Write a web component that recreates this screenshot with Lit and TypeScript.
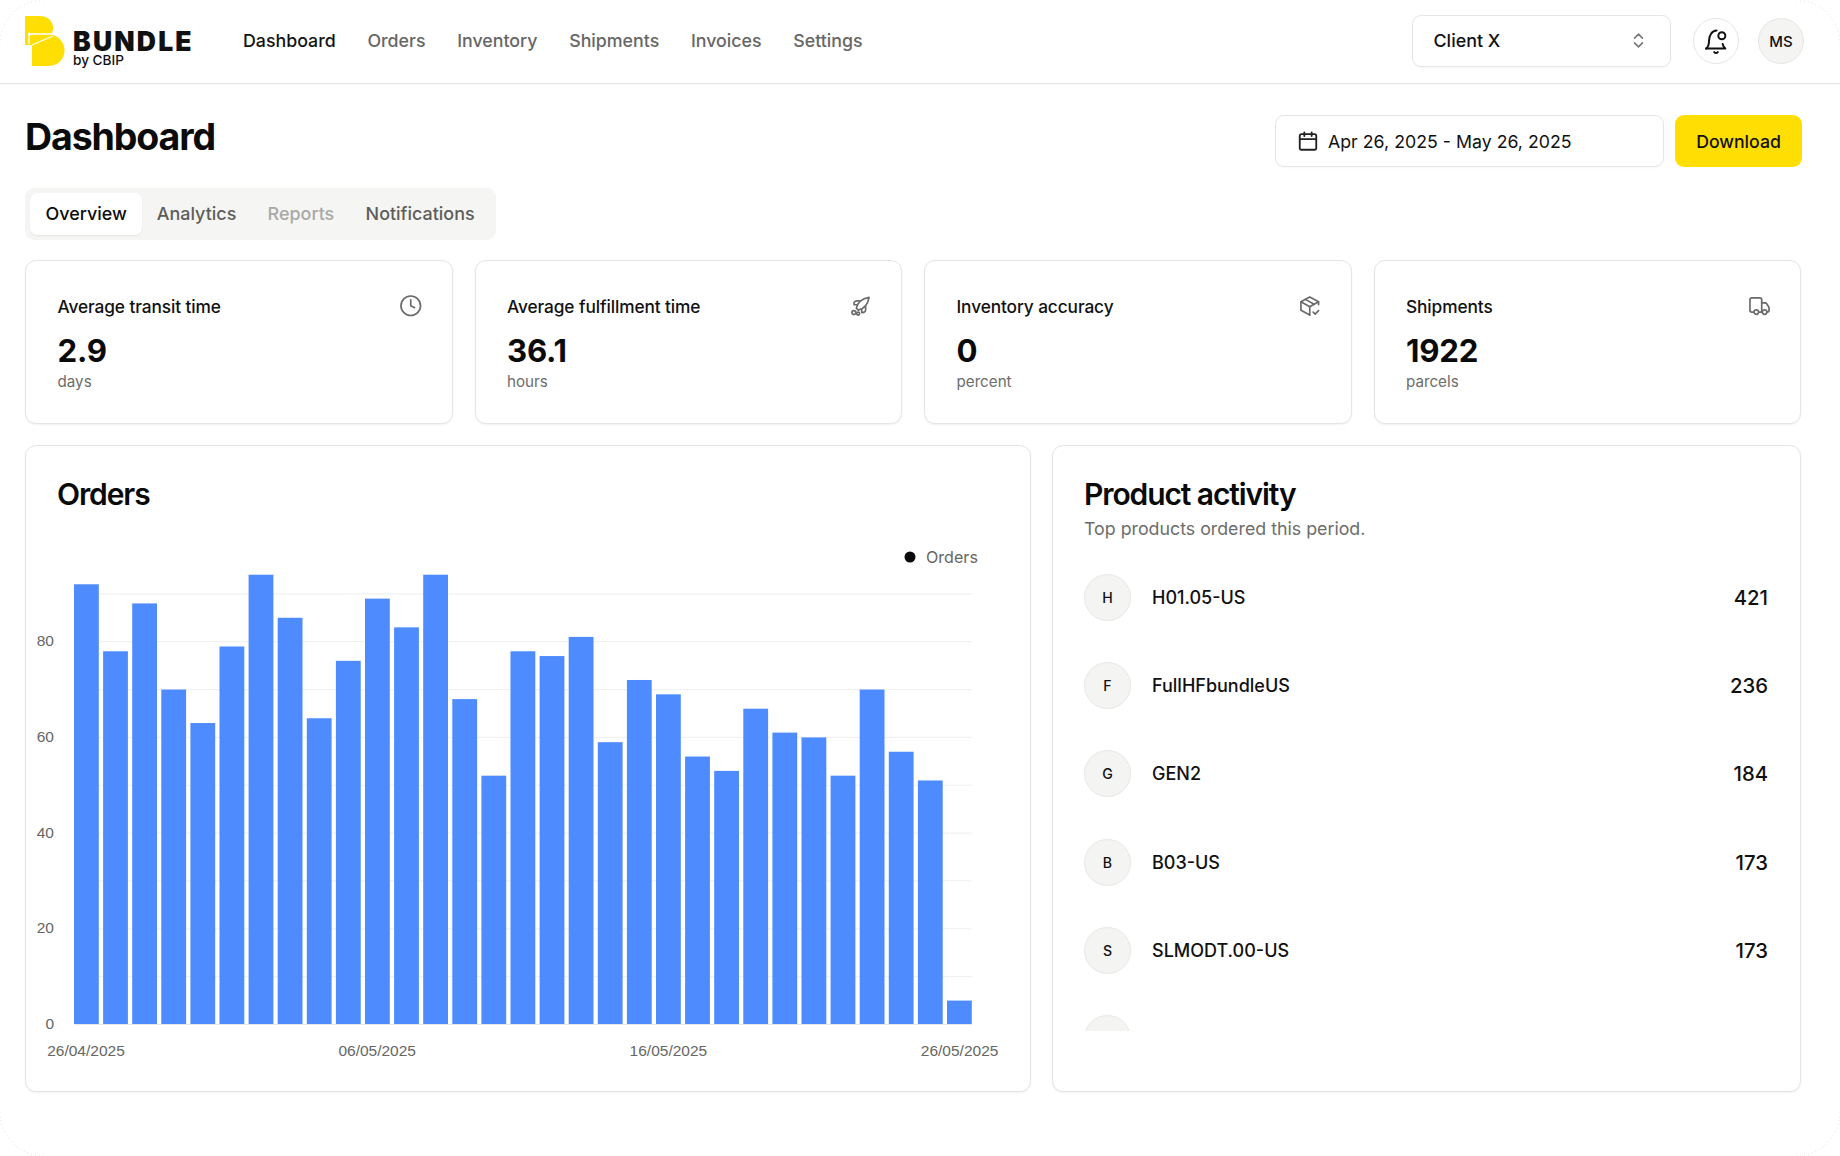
import { LitElement, html, css, svg } from "lit";
import { customElement } from "lit/decorators.js";

const BARS = [92,78,88,70,63,79,94,85,64,76,89,83,94,68,52,78,77,81,59,72,69,56,53,66,61,60,52,70,57,51,5];
const BASE = 485.500;
const UNIT = 4.785;
const X0 = 48;
const PITCH = 29.100;

const CARDS = [
  { title: "Average transit time", value: "2.9", unit: "days", icon: "clock" },
  { title: "Average fulfillment time", value: "36.1", unit: "hours", icon: "rocket" },
  { title: "Inventory accuracy", value: "0", unit: "percent", icon: "box" },
  { title: "Shipments", value: "1922", unit: "parcels", icon: "truck" },
];
const PRODUCTS = [
  { l: "H", n: "H01.05-US", v: "421" },
  { l: "F", n: "FullHFbundleUS", v: "236" },
  { l: "G", n: "GEN2", v: "184" },
  { l: "B", n: "B03-US", v: "173" },
  { l: "S", n: "SLMODT.00-US", v: "173" },
  { l: "", n: "", v: "" },
];

const icon = (name: string) => {
  switch (name) {
    case "clock":
      return html`<svg class="ic" viewBox="0 0 24 24"><circle cx="12" cy="12" r="10"/><path d="M12 6v6l4 2"/></svg>`;
    case "rocket":
      return html`<svg class="ic" viewBox="0 0 24 24"><path d="M9.500 16.500 7.500 14.500C8.500 10 12 5 20.500 3.500 19 12 14 15.500 9.500 16.500Z"/><path d="M8 11H5.200C4.500 9 6 7 8 7H11"/><path d="M13 16v2.800C15 19.500 17 18 17 16v-3"/><circle cx="5" cy="19" r="2"/><circle cx="9.300" cy="20" r="1.500"/></svg>`;
    case "box":
      return html`<svg class="ic" viewBox="0 0 24 24"><path d="M21 11V8L12 3 3 8v8.500L12 21.500"/><path d="M3 8l9 5 9-5"/><path d="M12 13v8.500"/><path d="M7.500 5.500l9 5"/><path d="M15.500 18.500l2 2 3.500-3.500"/></svg>`;
    default:
      return html`<svg class="ic" viewBox="0 0 24 24"><path d="M6 18.500H4a2 2 0 0 1-2-2V6a2 2 0 0 1 2-2h8a2 2 0 0 1 2 2v12.500"/><path d="M14 9h3.500a2 2 0 0 1 1.700 1l2.300 3.800V16.500a2 2 0 0 1-2 2"/><path d="M11 18.500h3.500"/><circle cx="8.500" cy="18.500" r="2.300"/><circle cx="17" cy="18.500" r="2.300"/></svg>`;
  }
};

@customElement("app-root")
export class AppRoot extends LitElement {
  static styles = css`
    :host {
      display: block;
      position: relative;
      width: 1840px;
      height: 1156px;
      background: #fff;
      font-family: Inter, "Noto Sans", sans-serif;
      color: #0c0c0c;
      overflow: hidden;
    }
    * { box-sizing: border-box; }
    .corners { position: absolute; inset: 0; pointer-events: none; }
    .corners path { fill: none; stroke: #e2e2e2; stroke-width: 1; stroke-dasharray: 1 3; }

    header {
      display: flex;
      align-items: center;
      height: 84px;
      padding: 0 36px 0 25px;
      border-bottom: 1px solid #e6e6e6;
      box-shadow: 0 1px 1px rgba(0,0,0,.03);
    }
    .logo { display: flex; align-items: center; width: 218px; flex: none; }
    .logo svg { width: 40px; height: 51px; flex: none; display: block; margin-top: -1px; }
    .wordmark { margin-left: 8px; display: flex; flex-direction: column; margin-top: 16.500px; }
    .wordmark b {
      font-size: 26.500px; line-height: 19px; font-weight: 900; letter-spacing: 2.200px; color: #111;
    }
    .wordmark span { font-size: 13.600px; line-height: 15px; font-weight: 500; color: #111; margin-top: 2.500px; }
    nav { display: flex; gap: 31.700px; font-size: 17.800px; font-weight: 500; color: #666; margin-top: -2px; }
    nav .on { color: #141414; }
    .spacer { flex: 1; }
    .select {
      width: 259px; height: 52px; margin-top: -2px;
      border: 1px solid #e5e5e5; border-radius: 9px;
      display: flex; align-items: center; justify-content: space-between;
      padding: 0 22px 0 20.500px;
      font-size: 17.900px; font-weight: 500; color: #111;
      box-shadow: 0 1px 2px rgba(0,0,0,.03);
    }
    .select svg { width: 19px; height: 19px; fill: none; stroke: #777; stroke-width: 2; stroke-linecap: round; stroke-linejoin: round; }
    .round {
      width: 46px; height: 46px; border-radius: 50%;
      border: 1px solid #e5e5e5;
      display: flex; align-items: center; justify-content: center;
      margin-left: 22px; margin-top: -1px; flex: none;
    }
    .round.bell svg { width: 28px; height: 28px; fill: none; stroke: #111; stroke-width: 1.700; stroke-linecap: round; stroke-linejoin: round; }
    .round.me { margin-left: 19px; background: #f4f4f3; font-size: 15px; font-weight: 500; color: #111; }

    main { padding: 31px 39px 0 25px; }
    .top { display: flex; align-items: flex-start; justify-content: space-between; height: 52px; }
    h1 {
      margin: 0; font-size: 37.500px; line-height: 44px; font-weight: 700; letter-spacing: -1.100px; color: #0b0b0b;
    }
    .actions { display: flex; gap: 11px; margin-right: -1px; }
    .date {
      width: 389px; height: 52px;
      border: 1px solid #e5e5e5; border-radius: 9px;
      display: flex; align-items: center; gap: 9px;
      padding-left: 21px;
      font-size: 17.750px; font-weight: 400; color: #111;
      box-shadow: 0 1px 2px rgba(0,0,0,.03);
    }
    .date svg { width: 22px; height: 22px; fill: none; stroke: #222; stroke-width: 2; stroke-linecap: round; stroke-linejoin: round; }
    .dl {
      width: 127px; height: 52px; border-radius: 9px; background: #ffde04;
      display: flex; align-items: center; justify-content: center;
      font-size: 17.700px; font-weight: 500; color: #111;
    }
    .tabs {
      display: inline-flex; align-items: center;
      margin-top: 21px;
      height: 52px; padding: 0 21px 0 4.500px;
      background: #f5f5f4; border-radius: 9px;
      font-size: 17.950px; font-weight: 500; color: #5d5d5b;
      gap: 31.300px;
    }
    .tabs div { line-height: 42px; }
    .tabs .on {
      background: #fff; color: #0c0c0c; padding: 0 15.500px 0 16px; border-radius: 7px;
      box-shadow: 0 1px 2px rgba(0,0,0,.07);
      margin-right: -17px;
    }
    .tabs .off { color: #a9a9a7; }

    .cards { display: grid; grid-template-columns: repeat(4, 1fr); gap: 22px; margin-top: 20px; }
    .card {
      border: 1px solid #e5e5e5; border-radius: 11px; background: #fff;
      box-shadow: 0 1px 2px rgba(0,0,0,.06);
    }
    .stat { height: 164px; padding: 32px 29px 0 31.500px; }
    .stat-head { display: flex; justify-content: space-between; align-items: center; height: 26px; font-size: 17.300px; font-weight: 500; letter-spacing: -.1px; color: #111; }
    .ic { width: 23.500px; height: 23.500px; fill: none; stroke: #6a6a68; stroke-width: 1.700; stroke-linecap: round; stroke-linejoin: round; flex: none; display: block; }
    .val { font-size: 31.200px; line-height: 36px; font-weight: 700; margin-top: 14px; color: #0a0a0a; letter-spacing: -.2px; }
    .unit { font-size: 15.200px; line-height: 20px; color: #6d6d6b; margin-top: 3px; }

    .row { display: grid; grid-template-columns: 1006px 1fr; gap: 21px; margin-top: 21px; }
    .panel { height: 647px; position: relative; }
    h2 { margin: 0; font-size: 30px; line-height: 36px; font-weight: 600; letter-spacing: -1.100px; color: #0a0a0a; }
    .orders { padding: 30px 0 0 0; }
    .orders h2 { padding-left: 31px; }
    .chart { display: block; margin-top: 27px; width: 1004px; height: 560px; }
    .chart text { font-family: "Liberation Sans", Arial, sans-serif; font-size: 15.500px; fill: #666664; }
    .chart text.lg { font-family: Inter, sans-serif; fill: #666664; font-size: 16.100px; }

    .products { padding: 30px 32px 0 31px; }
    .sub { font-size: 17.800px; line-height: 24px; color: #6d6d6b; margin-top: 5px; }
    .list { margin-top: 33px; height: 457px; overflow: hidden; display: flex; flex-direction: column; gap: 41.200px; }
    .item { display: flex; align-items: center; height: 47px; flex: none; }
    .av {
      width: 47px; height: 47px; border-radius: 50%; background: #f4f4f3; border: 1px solid #e7e7e6;
      display: flex; align-items: center; justify-content: center;
      font-size: 14.100px; font-weight: 500; color: #111; flex: none;
    }
    .name { margin-left: 21px; font-size: 18px; font-weight: 500; color: #111; flex: 1; }
    .num { font-size: 20.300px; font-weight: 500; color: #111; }
  `;

  render() {
    const grid = Array.from({ length: 9 }, (_, i) => BASE - (i + 1) * UNIT * 10);
    const right = X0 + 30 * PITCH + 24.800;
    return html`
      <header>
        <div class="logo">
          <svg viewBox="0 0 40 51" aria-hidden="true">
            <path fill="#ffde04" d="M0 0H15C24 0 29 7 28 13 27 16 27 18 28 19 35 21 40 28 39.500 35 39 44 32 50 23 50H7V29H0Z"/>
            <path fill="none" stroke="#fff" stroke-width="1.300" d="M4 18H28M4 18V28M7 29 28 20"/>
            <circle cx="4.500" cy="18" r="1.600" fill="#fff"/>
          </svg>
          <div class="wordmark"><b>BUNDLE</b><span>by CBIP</span></div>
        </div>
        <nav>
          <span class="on">Dashboard</span><span>Orders</span><span>Inventory</span><span>Shipments</span><span>Invoices</span><span>Settings</span>
        </nav>
        <div class="spacer"></div>
        <div class="select">Client X
          <svg viewBox="0 0 24 24"><path d="m7 15 5 5 5-5"/><path d="m7 9 5-5 5 5"/></svg>
        </div>
        <div class="round bell">
          <svg viewBox="0 0 24 24"><path d="M3.500 18.500c2-1.500 2.500-3.500 2.500-6.500C6 7.500 8.500 3 12.500 3"/><path d="M3.500 18.500H20c-1.200-1-2-2.200-2.300-4"/><circle cx="17" cy="7.500" r="3"/><path d="M10.500 21.500c.8 1 2.200 1 3 0"/></svg>
        </div>
        <div class="round me">MS</div>
      </header>
      <main>
        <div class="top">
          <h1>Dashboard</h1>
          <div class="actions">
            <div class="date">
              <svg viewBox="0 0 24 24"><rect x="3" y="4.500" width="18" height="17" rx="2"/><path d="M3 10h18M8 2.500v4M16 2.500v4"/></svg>
              Apr 26, 2025 - May 26, 2025
            </div>
            <div class="dl">Download</div>
          </div>
        </div>
        <div class="tabs">
          <div class="on">Overview</div><div>Analytics</div><div class="off">Reports</div><div>Notifications</div>
        </div>
        <div class="cards">
          ${CARDS.map(
            (c) => html`<div class="card stat">
              <div class="stat-head"><span>${c.title}</span>${icon(c.icon)}</div>
              <div class="val">${c.value}</div>
              <div class="unit">${c.unit}</div>
            </div>`
          )}
        </div>
        <div class="row">
          <div class="card panel orders">
            <h2>Orders</h2>
            <svg class="chart" viewBox="0 0 1004 560">
              ${grid.map((y) => svg`<line x1="48" x2=${right} y1=${y} y2=${y} stroke="#f1f1f0" stroke-width="1.200"/>`)}
              ${BARS.map(
                (v, i) => svg`<rect x=${X0 + i * PITCH} y=${BASE - v * UNIT} width="24.800" height=${v * UNIT} fill="#4d8bff"/>`
              )}
              <line x1="48" x2=${right} y1=${BASE} y2=${BASE} stroke="#e9e9e8" stroke-width="1"/>
              ${[0, 20, 40, 60, 80].map(
                (v) => svg`<text x="28" y=${BASE - v * UNIT + 4.500} text-anchor="end">${v}</text>`
              )}
              ${["26/04/2025", "06/05/2025", "16/05/2025", "26/05/2025"].map(
                (d, i) => svg`<text x=${60 + i * 291.200} y=${BASE + 31} text-anchor="middle">${d}</text>`
              )}
              <circle cx="884" cy="18" r="5.500" fill="#0a0a0a"/>
              <text class="lg" x="900" y="24">Orders</text>
            </svg>
          </div>
          <div class="card panel products">
            <h2>Product activity</h2>
            <div class="sub">Top products ordered this period.</div>
            <div class="list">
              ${PRODUCTS.map(
                (p) => html`<div class="item">
                  <div class="av">${p.l}</div>
                  <div class="name">${p.n}</div>
                  <div class="num">${p.v}</div>
                </div>`
              )}
            </div>
          </div>
        </div>
      </main>
      <svg class="corners" viewBox="0 0 1840 1156" aria-hidden="true">
        <path d="M0 44A44 44 0 0 1 44 0"/>
        <path d="M1796 0A44 44 0 0 1 1840 44"/>
        <path d="M0 1112A44 44 0 0 0 44 1156"/>
        <path d="M1796 1156A44 44 0 0 0 1840 1112"/>
      </svg>
    `;
  }
}
